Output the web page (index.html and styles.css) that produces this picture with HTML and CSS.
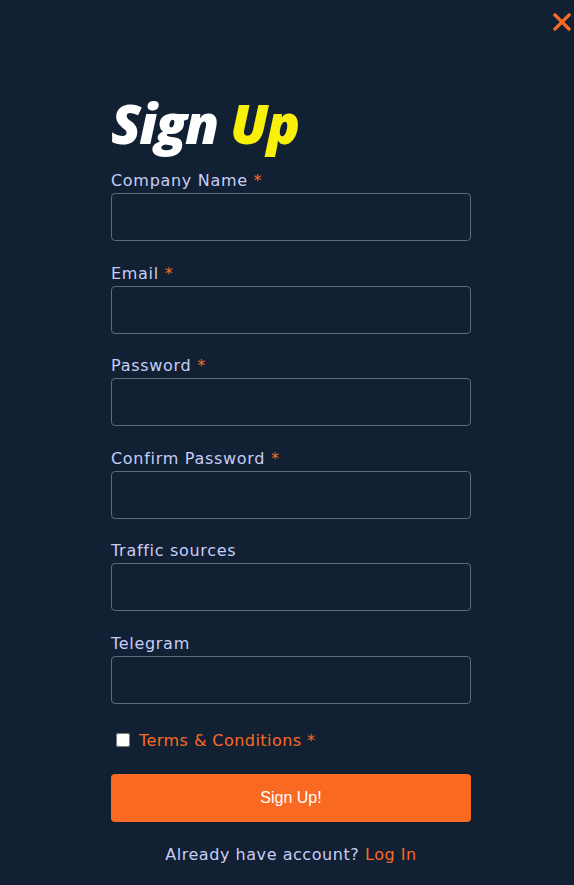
FILE: index.html
```html
<!DOCTYPE html>
<html lang="en">
<head>
<meta charset="utf-8">
<title>Sign Up</title>
<link rel="stylesheet" href="styles.css">
</head>
<body>
<div class="modal">
  <button class="close" aria-label="Close">
    <svg width="18" height="18" viewBox="0 0 18 18"><path d="M2 2L16 16M16 2L2 16" stroke="#f96b22" stroke-width="3.2" stroke-linecap="square"/></svg>
  </button>
  <form class="form">
    <h1 class="title">Sign <span class="accent">Up</span></h1>
    <div class="field">
      <label class="label">Company Name <span class="req">*</span></label>
      <input class="input" type="text">
    </div>
    <div class="field">
      <label class="label">Email <span class="req">*</span></label>
      <input class="input" type="email">
    </div>
    <div class="field">
      <label class="label">Password <span class="req">*</span></label>
      <input class="input" type="password">
    </div>
    <div class="field">
      <label class="label">Confirm Password <span class="req">*</span></label>
      <input class="input" type="password">
    </div>
    <div class="field">
      <label class="label">Traffic sources</label>
      <input class="input" type="text">
    </div>
    <div class="field">
      <label class="label">Telegram</label>
      <input class="input" type="text">
    </div>
    <label class="terms"><input type="checkbox" class="check"><span>Terms &amp; Conditions *</span></label>
    <button type="button" class="submit">Sign Up!</button>
    <p class="login">Already have account? <a class="link" href="#">Log In</a></p>
  </form>
</div>
</body>
</html>
```
FILE: styles.css
```css
html, body {
  margin: 0;
  padding: 0;
  background: #112033;
}
body {
  font-family: "DejaVu Sans", "Open Sans", sans-serif;
  width: 574px;
  height: 885px;
  overflow: hidden;
}
.modal {
  position: relative;
  height: 885px;
}
.close {
  position: absolute;
  top: 13px;
  right: 3px;
  width: 18px;
  height: 18px;
  padding: 0;
  border: 0;
  background: none;
  cursor: pointer;
}
.close svg { display: block; }
.form {
  width: 360px;
  margin: 0 0 0 111px;
  padding-top: 88px;
  display: flex;
  flex-direction: column;
}
.title {
  margin: 0 0 11px;
  font-family: "Open Sans", sans-serif;
  font-weight: 800;
  font-style: italic;
  font-size: 55px;
  line-height: 70px;
  color: #ffffff;
  letter-spacing: -1.8px;
}
.accent { color: #f8f00b; }
.field {
  display: flex;
  flex-direction: column;
  margin-bottom: 20.5px;
}
.label {
  font-size: 16px;
  line-height: 24px;
  color: #c8cdf6;
  letter-spacing: 0.7px;
}
.req { color: #f96b22; }
.input {
  box-sizing: border-box;
  height: 48px;
  width: 100%;
  background: #112033;
  border: 1px solid #5d6b7b;
  border-radius: 4px;
  color: #fff;
  font-size: 16px;
  padding: 0 12px;
  margin: 0;
}
.terms {
  display: flex;
  align-items: center;
  gap: 9px;
  padding-left: 5px;
  margin-top: 4px;
  height: 24px;
  font-size: 16px;
  color: #f96b22;
  letter-spacing: 0.45px;
}
.check {
  width: 14px;
  height: 14px;
  margin: 0;
}
.submit {
  margin-top: 22px;
  height: 48px;
  border: 0;
  border-radius: 4px;
  background: #f96921;
  color: #fff;
  font-family: "Liberation Sans", Arial, sans-serif;
  font-size: 16px;
  cursor: pointer;
}
.login {
  margin: 21px 0 0;
  text-align: center;
  font-size: 16px;
  line-height: 24px;
  color: #c8cdf6;
  letter-spacing: 0.55px;
}
.link {
  color: #f96b22;
  text-decoration: none;
}
```
